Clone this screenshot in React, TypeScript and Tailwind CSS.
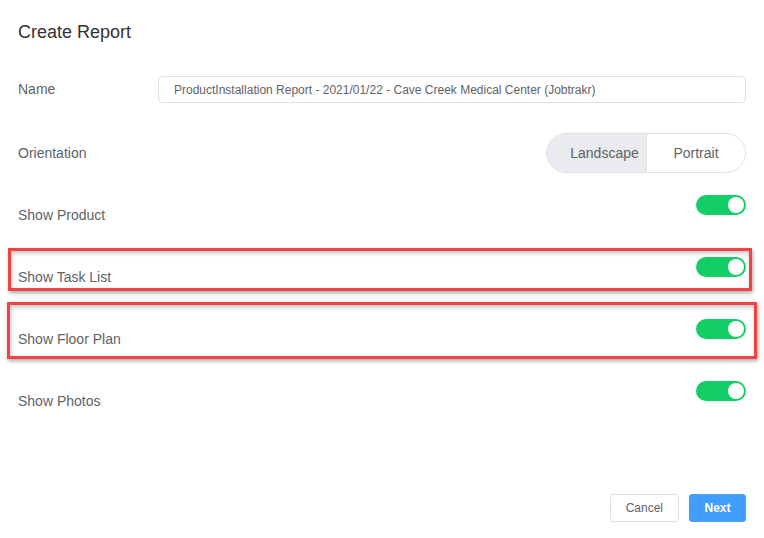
import { useState } from "react";

const font = { fontFamily: '"Liberation Sans", Arial, Helvetica, sans-serif' };

export default function App() {
  const [orientation, setOrientation] = useState<"landscape" | "portrait">("landscape");
  const [flags, setFlags] = useState({ product: true, task: true, floor: true, photos: true });

  return (
    <div className="relative h-[538px] w-[764px] overflow-hidden bg-white px-[18px]" style={font}>
      <h1 className="flex h-[64px] items-center text-[18px] text-[#303133]">Create Report</h1>

      <div className="mt-[12px] flex items-center">
        <label className="w-[140px] text-[14px] text-[#606266]">Name</label>
        <input
          readOnly
          value="ProductInstallation Report - 2021/01/22 - Cave Creek Medical Center (Jobtrakr)"
          className="h-[27px] flex-1 rounded-[4px] border border-[#dcdfe6] px-[15px] text-[12px] text-[#606266] outline-none"
          style={font}
        />
      </div>

      <div className="mt-[30px] flex items-center justify-between">
        <span className="text-[14px] text-[#606266]">Orientation</span>
        <div className="flex h-[40px] overflow-hidden rounded-full border border-[#dcdfe6] text-[14px] text-[#606266]">
          <button
            type="button"
            onClick={() => setOrientation("landscape")}
            className={`w-[100px] border-r border-[#dcdfe6] pl-[16px] ${orientation === "landscape" ? "bg-[#e9ebef]" : "bg-white"}`}
          >
            Landscape
          </button>
          <button
            type="button"
            onClick={() => setOrientation("portrait")}
            className={`w-[98px] ${orientation === "portrait" ? "bg-[#e9ebef]" : "bg-white"}`}
          >
            Portrait
          </button>
        </div>
      </div>

      <div className="mt-[22px]">
        <ToggleRow label="Show Product" on={flags.product} onChange={() => setFlags({ ...flags, product: !flags.product })} />
        <ToggleRow label="Show Task List" on={flags.task} onChange={() => setFlags({ ...flags, task: !flags.task })} />
        <ToggleRow label="Show Floor Plan" on={flags.floor} onChange={() => setFlags({ ...flags, floor: !flags.floor })} />
        <ToggleRow label="Show Photos" on={flags.photos} onChange={() => setFlags({ ...flags, photos: !flags.photos })} />
      </div>

      <div className="mt-[51px] flex justify-end gap-[10px]">
        <button
          type="button"
          className="h-[28px] rounded-[3px] border border-[#dcdfe6] bg-white px-[15px] text-[12px] text-[#606266]"
        >
          Cancel
        </button>
        <button
          type="button"
          className="h-[28px] w-[57px] rounded-[3px] border border-[#409eff] bg-[#409eff] text-[12px] font-bold text-white"
        >
          Next
        </button>
      </div>

      {/* annotation boxes */}
      <div className="pointer-events-none absolute left-[8px] top-[248px] h-[43px] w-[744px] border-[3px] border-[#f04444] shadow-[1px_2px_4px_rgba(0,0,0,0.35),inset_1px_2px_4px_rgba(0,0,0,0.25)]" />
      <div className="pointer-events-none absolute left-[7px] top-[302px] h-[57px] w-[750px] border-[3px] border-[#f04444] shadow-[1px_2px_4px_rgba(0,0,0,0.35),inset_1px_2px_4px_rgba(0,0,0,0.25)]" />
    </div>
  );
}

function ToggleRow({ label, on, onChange }: { label: string; on: boolean; onChange: () => void }) {
  return (
    <div className="flex h-[62px] items-start justify-between">
      <span className="pt-[12px] text-[14px] leading-4 text-[#606266]">{label}</span>
      <button
        type="button"
        onClick={onChange}
        className={`relative h-[20px] w-[50px] rounded-full ${on ? "bg-[#13ce66]" : "bg-[#dcdfe6]"}`}
      >
        <span
          className={`absolute top-[2px] h-[16px] w-[16px] rounded-full bg-white ${on ? "right-[2px]" : "left-[2px]"}`}
        />
      </button>
    </div>
  );
}
